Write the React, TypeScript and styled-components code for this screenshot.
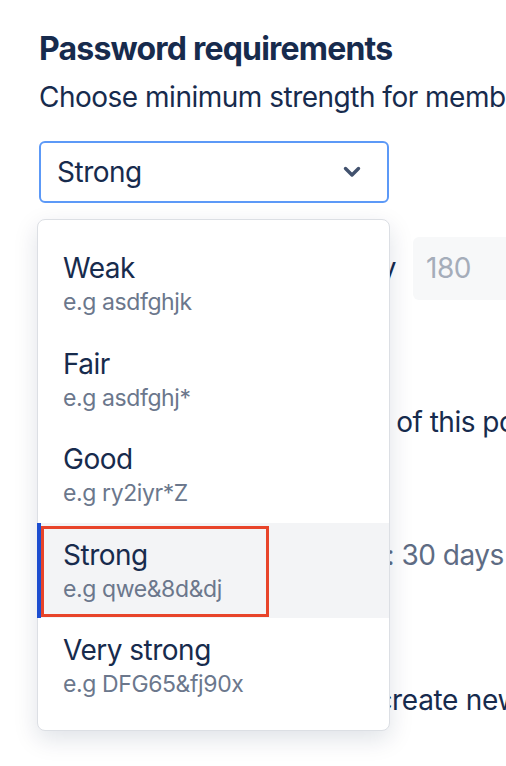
import React from "react";
import styled, { createGlobalStyle } from "styled-components";

const GlobalStyle = createGlobalStyle`
  html, body { margin: 0; padding: 0; background: #ffffff; }
  body { font-family: Inter, "Noto Sans", "Liberation Sans", sans-serif; color: #172b4d; }
  * { box-sizing: border-box; }
`;

const Page = styled.div`
  position: relative;
  width: 506px;
  height: 766px;
  overflow: hidden;
  background: #ffffff;
  padding: 27px 0 0 39px;
`;

const Heading = styled.h2`
  margin: 0;
  font-size: 32px;
  line-height: 44px;
  font-weight: 700;
  color: #172b4d;
  letter-spacing: -0.8px;
  white-space: nowrap;
`;

const Text = styled.p<{ $muted?: boolean; $gap?: number; $track?: number }>`
  margin: 0;
  margin-top: ${(p) => p.$gap ?? 0}px;
  font-size: 28px;
  line-height: 40px;
  font-weight: 400;
  letter-spacing: ${(p) => p.$track ?? -0.5}px;
  color: ${(p) => (p.$muted ? "#5e6c84" : "#172b4d")};
  white-space: nowrap;
`;

const SelectWrap = styled.div`
  position: relative;
  margin-top: 24px;
  width: 350px;
`;

const SelectBox = styled.div`
  height: 62px;
  border: 2px solid #5c99f7;
  border-radius: 6px;
  display: flex;
  align-items: center;
  justify-content: space-between;
  padding: 0 26px 0 16px;
  font-size: 28px;
  letter-spacing: -0.5px;
  color: #172b4d;
`;

const Menu = styled.div`
  position: absolute;
  top: 78px;
  left: -2px;
  width: 353px;
  padding: 16px 0;
  background: #ffffff;
  border-radius: 8px;
  border: 1px solid #dcdfe4;
  box-shadow: 0 8px 24px rgba(9, 30, 66, 0.13);
  z-index: 2;
`;

const Option = styled.div<{ $active?: boolean }>`
  position: relative;
  height: 95.5px;
  padding: 14px 0 0 22px;
  background: ${(p) => (p.$active ? "#f3f4f6" : "transparent")};
  border-left: 4px solid ${(p) => (p.$active ? "#1d4ed0" : "transparent")};
  margin-left: -1px;
`;

const OptionTitle = styled.div`
  font-size: 28px;
  line-height: 36px;
  letter-spacing: -0.5px;
  color: #172b4d;
`;

const OptionHint = styled.div`
  font-size: 23px;
  line-height: 32px;
  letter-spacing: -0.4px;
  color: #6b778c;
`;

const Annotation = styled.div`
  position: absolute;
  left: 0;
  top: 3px;
  width: 228px;
  height: 91px;
  border: 3px solid #e8442a;
  pointer-events: none;
`;

const Form = styled.div`
  display: flex;
  flex-direction: column;
  margin-top: 33px;
`;

const Row = styled.div`
  display: flex;
  align-items: center;
  gap: 17px;
  height: 64px;
`;

const RowLabel = styled(Text)`
  flex: none;
  width: 357px;
  text-align: right;
`;

const NumberInput = styled.div`
  flex: none;
  width: 120px;
  height: 63px;
  border-radius: 6px;
  background: #f7f8f9;
  color: #a5adba;
  font-size: 28px;
  letter-spacing: -0.5px;
  display: flex;
  align-items: center;
  padding-left: 13px;
`;

const options = [
  { label: "Weak", hint: "e.g asdfghjk" },
  { label: "Fair", hint: "e.g asdfghj*" },
  { label: "Good", hint: "e.g ry2iyr*Z" },
  { label: "Strong", hint: "e.g qwe&8d&dj" },
  { label: "Very strong", hint: "e.g DFG65&fj90x" },
];

const Chevron = () => (
  <svg width="18" height="12" viewBox="0 0 18 12" fill="none">
    <path d="M2.5 2.5 L9 9 L15.5 2.5" stroke="#42526e" strokeWidth="3.4" strokeLinecap="round" strokeLinejoin="round" />
  </svg>
);

export default function App() {
  return (
    <>
      <GlobalStyle />
      <Page>
        <Heading>Password requirements</Heading>
        <Text $gap={6}>Choose minimum strength for member passwords</Text>
        <SelectWrap>
          <SelectBox>
            <span>Strong</span>
            <Chevron />
          </SelectBox>
          <Menu>
            {options.map((o) => (
              <Option key={o.label} $active={o.label === "Strong"}>
                <OptionTitle>{o.label}</OptionTitle>
                <OptionHint>{o.hint}</OptionHint>
                {o.label === "Strong" && <Annotation />}
              </Option>
            ))}
          </Menu>
        </SelectWrap>
        <Form>
          <Row>
            <RowLabel>Expire passwords every</RowLabel>
            <NumberInput>180</NumberInput>
          </Row>
          <Text $gap={102}>Ensure members are aware of this policy</Text>
          <Text $gap={93} $muted>Password expiry reminders: 30 days</Text>
          <Text $gap={105} $track={-0.32}>Members will be asked to create new passwords</Text>
        </Form>
      </Page>
    </>
  );
}
